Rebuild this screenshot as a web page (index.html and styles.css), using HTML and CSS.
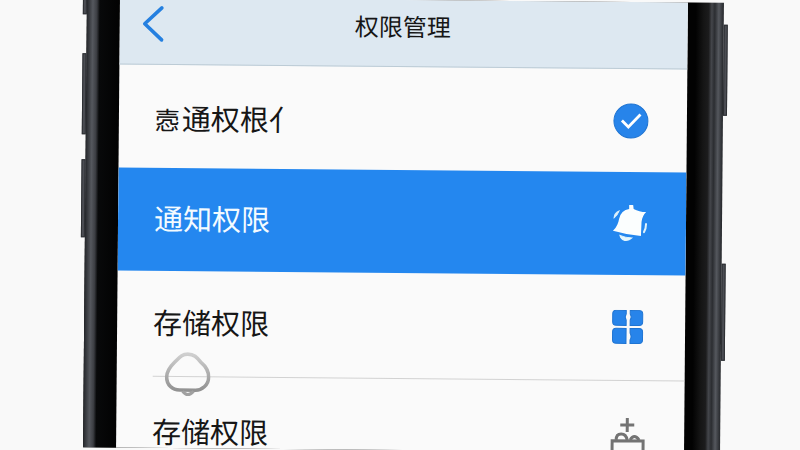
FILE: index.html
```html
<!DOCTYPE html>
<html lang="zh-CN">
<head>
  <meta charset="UTF-8">
  <meta name="viewport" content="width=device-width, initial-scale=1.0">
  <title>权限管理</title>
  <link rel="stylesheet" href="styles.css">
</head>
<body>
<div class="stage">
  <div class="phone">
    <span class="key key-mute"></span>
    <span class="key key-up"></span>
    <span class="key key-down"></span>
    <span class="key key-power"></span>
    <span class="key key-action"></span>

    <main class="screen">
      <header class="topbar">
        <button class="btn-back" type="button" aria-label="返回">
          <svg width="22" height="38" viewBox="0 0 22 38">
            <path d="M19 3 L2 19 L19 35" fill="none" stroke="#2580e0" stroke-width="3.600" stroke-linecap="round" stroke-linejoin="round"/>
          </svg>
        </button>
        <h1>权限管理</h1>
      </header>

      <ul class="list">
        <li class="row row-first">
          <span class="label"><span class="small">悫</span>通权根亻</span>
          <svg class="icon" width="36" height="36" viewBox="0 0 36 36">
            <circle cx="18" cy="18" r="17" fill="#2784ea" stroke="#1f74d2" stroke-width="1"/>
            <path d="M9 17.500 L15.500 24 L27.500 11.500" fill="none" stroke="#fff" stroke-width="2.800"/>
          </svg>
        </li>
        <li class="row active">
          <span class="label">通知权限</span>
          <svg class="icon" width="36" height="38" viewBox="0 3 36 38">
            <path d="M17 3 Q19 1 21 3 L21.500 7 Q27 10 34 10 Q30 14 29.500 20 L29 34 Q15 33 1 29 Q6 24 7 17 Q9 8 17 7 Z" fill="#fbfefe"/>
            <path d="M8 33.500 Q13 35.500 20 36 Q17 39 13 38.500 Q9 37.500 8 33.500 Z" fill="#e4f6fc" stroke="#e4f6fc"/>
            <path d="M7 9 Q2 11 2 16 Q5 14 7 9 Z" fill="#dff2fb" stroke="#dff2fb"/>
            <path d="M34 22 Q34 27 32 30" fill="none" stroke="#dff2fb" stroke-width="2" stroke-linecap="round"/>
          </svg>
        </li>
        <li class="row row-storage">
          <span class="label">存储权限</span>
          <svg class="icon" width="36" height="36" viewBox="1 1 36 36">
            <g fill="#2784ea" stroke="#1f74d2" stroke-width="1">
              <path d="M6 1.500 H16 V5 Q14 8 16 11 V16.500 H6 Q2.500 16.500 2.500 13 V5 Q2.500 1.500 6 1.500 Z"/>
              <path d="M20 1.500 H29 Q32.500 1.500 32.500 5 V13 Q32.500 16.500 29 16.500 H20 V11 Q22 8 20 5 Z"/>
              <path d="M6 19.500 H16 V34.500 H6 Q2.500 34.500 2.500 31 V23 Q2.500 19.500 6 19.500 Z"/>
              <path d="M20 19.500 H29 Q32.500 19.500 32.500 23 V31 Q32.500 34.500 29 34.500 H20 V31 Q22 28 20 24 Z"/>
            </g>
          </svg>
        </li>
        <li class="row row-more">
          <span class="label">存储权限</span>
          <svg class="icon" width="36" height="44" viewBox="0 -3 36 44">
            <g fill="none" stroke="#737373" stroke-width="3">
              <path d="M17 0 V14 M10 7 H24"/>
              <path d="M2 44 V23 H33 V44 M2 34 H33"/>
              <path d="M6 22 Q6 16 11 16 Q16 16 17 22 M20 22 Q24 15 29 22"/>
            </g>
          </svg>
        </li>
      </ul>
      <svg class="touch" width="46" height="46" viewBox="0 0 46 46">
        <defs>
          <linearGradient id="ring" x1="0" y1="0" x2="0" y2="1">
            <stop offset="0" stop-color="#cfcfcf"/>
            <stop offset="1" stop-color="#929292"/>
          </linearGradient>
        </defs>
        <path d="M23 2 C29 2 32 5 36 10 C42 15 44 19 44 25 C44 33 37 38 31 38 H15 C8 38 2 33 2 25 C2 19 5 15 10 10 C15 5 17 2 23 2 Z" fill="none" stroke="url(#ring)" stroke-width="3.600"/>
        <path d="M18 39 Q23 46 29 39" fill="none" stroke="#a0a0a0" stroke-width="3"/>
      </svg>
    </main>
  </div>
</div>
</body>
</html>
```
FILE: styles.css
```css
* {
  box-sizing: border-box;
}
body {
  margin: 0;
  font-family: "Noto Sans CJK SC", "Noto Sans", sans-serif;
  background: #f9f9f9;
  color: #161616;
}
.stage {
  height: 100vh;
  padding: 0 78px 0 85px;
  overflow: hidden;
}
.phone {
  position: relative;
  display: flex;
  height: 100%;
  padding: 0 36px 0 33px;
  background:
    linear-gradient(90deg, #24262a 0, #55585e 6px, #3c3e43 10px, #08090a 13px, #020202 33px, transparent 33px),
    linear-gradient(270deg, #25272b 0, #55585e 5px, #2b2d31 9px, #44464b 12px, #1c1c1d 15px, #151515 20px, #020202 28px, #020202 100%);
  transform: rotate(0.5deg);
}
.screen {
  position: relative;
  flex: 1;
  background: #fafafa;
  overflow: hidden;
}

/* side keys */
.key {
  position: absolute;
  width: 4px;
  background: #4b4d53;
  border: 1px solid #2d2f33;
}
.key-mute {
  left: -4px;
  top: 0;
  height: 17px;
}
.key-up {
  left: -4px;
  top: 56px;
  height: 81px;
}
.key-down {
  left: -4px;
  top: 162px;
  height: 78px;
}
.key-power {
  right: -4px;
  top: 22px;
  height: 91px;
}
.key-action {
  right: -4px;
  top: 261px;
  height: 97px;
}

.topbar {
  display: grid;
  grid-template-columns: 60px 1fr 62px;
  align-items: center;
  height: 67px;
  padding-bottom: 14px;
  background: #dde8f1;
  border-bottom: 1px solid #bccbd5;
}
.topbar h1 {
  margin: 0;
  font-size: 24px;
  line-height: 32px;
  font-weight: 400;
  text-align: center;
}
.btn-back {
  display: flex;
  padding: 0 0 0 23px;
  border: none;
  background: none;
  cursor: pointer;
}

.list {
  margin: 0;
  padding: 0;
  list-style: none;
}
.row {
  display: flex;
  align-items: center;
  justify-content: space-between;
  height: 103px;
  padding: 0 38px 0 36px;
}
.label {
  padding-bottom: 6px;
  font-size: 29px;
  line-height: 40px;
}
.row-first .label {
  padding: 2px 0 0;
}
.small {
  margin-right: 2px;
  font-size: 25px;
}
.active {
  background: #2487ef;
  color: #f4fbff;
}
.row-storage {
  height: 105px;
}
.row-more {
  height: 112px;
  margin-left: 36px;
  padding-left: 0;
  border-top: 1px solid #d2d2d2;
}
.touch {
  position: absolute;
  left: 48px;
  top: 354px;
}
```
